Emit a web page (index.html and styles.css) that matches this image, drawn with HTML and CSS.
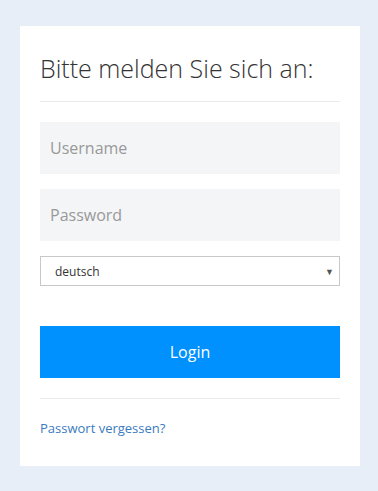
FILE: index.html
```html
<!DOCTYPE html>
<html>
<head>
<meta charset="utf-8">
<link rel="stylesheet" href="styles.css">
</head>
<body>
<div class="card">
  <h1 class="title">Bitte melden Sie sich an:</h1>
  <div class="divider"></div>
  <form class="form">
    <input class="field" type="text" placeholder="Username">
    <input class="field" type="password" placeholder="Password">
    <div class="select">
      <span class="select-value">deutsch</span>
      <span class="select-arrow">&#9660;</span>
    </div>
    <button class="btn" type="button">Login</button>
  </form>
  <div class="divider divider-bottom"></div>
  <a class="link" href="#">Passwort vergessen?</a>
</div>
</body>
</html>
```

FILE: styles.css
```css
html, body {
  margin: 0;
  padding: 0;
}
body {
  background: #e8eef8;
  font-family: "Open Sans", sans-serif;
  padding: 26px 18px 0 20px;
  height: 491px;
  box-sizing: border-box;
}
.card {
  background: #fff;
  width: 340px;
  box-sizing: border-box;
  padding: 26px 20px 28px 20px;
}
.title {
  margin: 0;
  font-weight: 300;
  font-size: 25px;
  line-height: 32px;
  color: #333;
}
.divider {
  height: 1px;
  background: #ebebeb;
  margin-top: 17px;
}
.form {
  display: flex;
  flex-direction: column;
  margin-top: 20px;
}
.field {
  height: 52px;
  border: none;
  background: #f4f5f7;
  padding: 0 10px;
  font-family: "Open Sans", sans-serif;
  font-size: 16px;
  color: #555;
  margin-bottom: 15px;
  outline: none;
}
.field::placeholder {
  color: #999;
}
.select {
  height: 30px;
  border: 1px solid #c8c8c8;
  box-sizing: border-box;
  display: flex;
  align-items: center;
  justify-content: space-between;
  padding: 0 5px 0 14px;
  font-size: 12px;
  color: #333;
}
.select-arrow {
  font-size: 9px;
  color: #555;
}
.btn {
  margin-top: 40px;
  height: 52px;
  border: none;
  background: #0091ff;
  color: #fff;
  font-family: "Open Sans", sans-serif;
  font-size: 16px;
}
.divider-bottom {
  margin-top: 20px;
}
.link {
  display: block;
  margin-top: 20px;
  font-size: 13px;
  line-height: 19px;
  color: #3a7bbf;
  text-decoration: none;
}
```
